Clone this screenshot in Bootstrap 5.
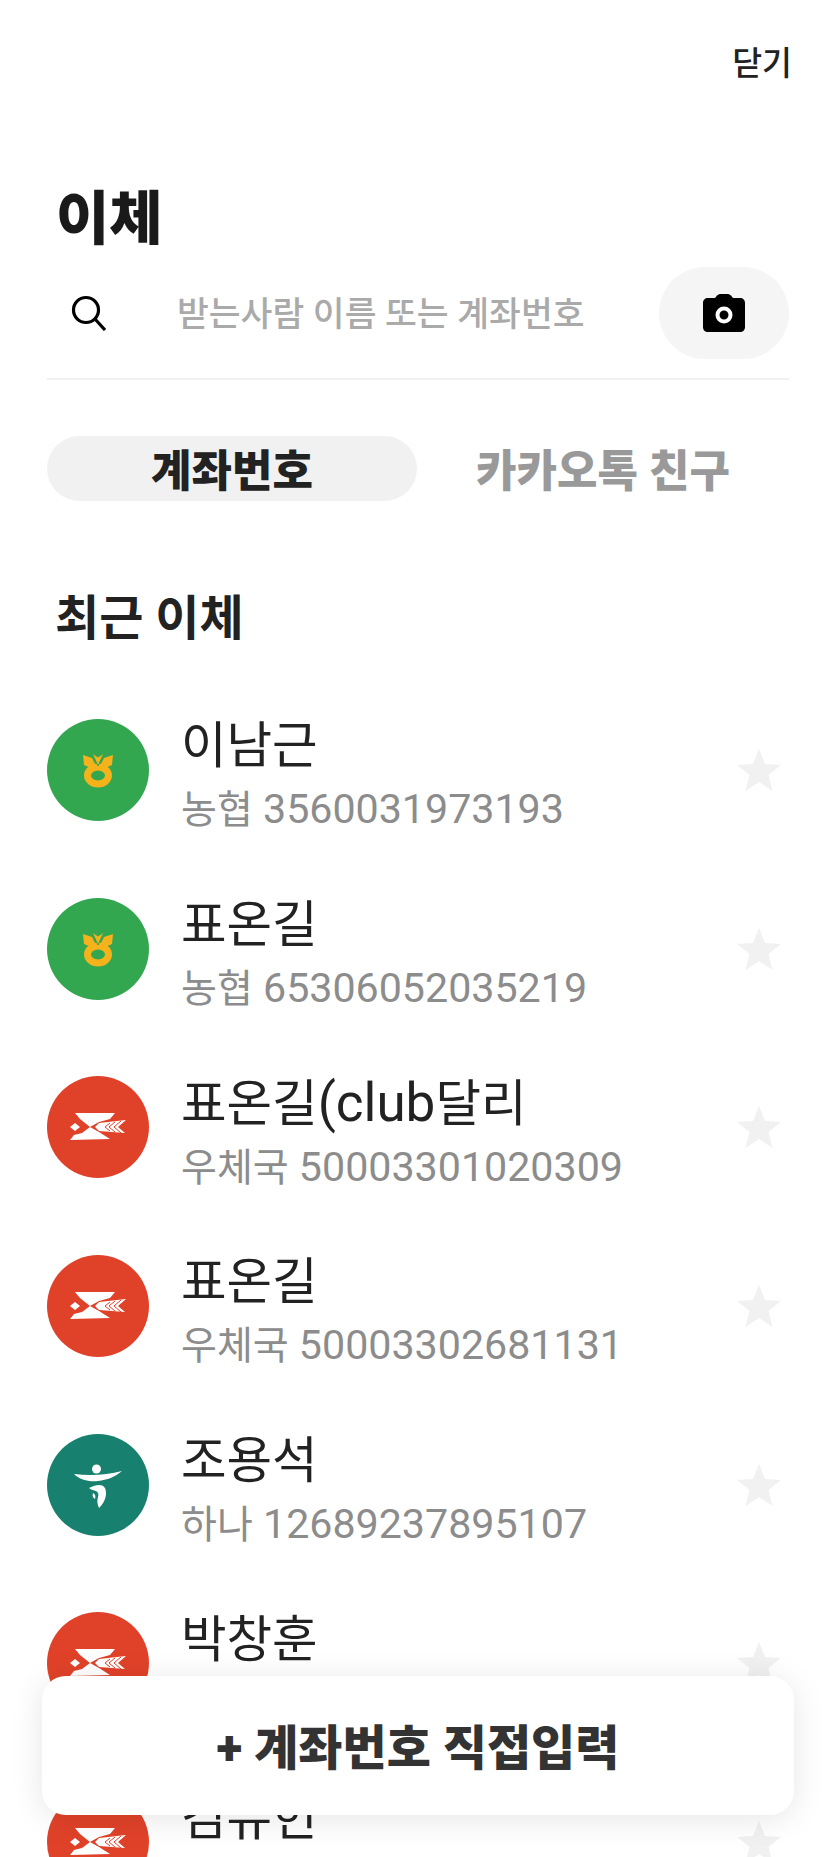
<!DOCTYPE html>
<html lang="ko">
<head>
  <meta charset="UTF-8" />
  <title>이체</title>
  <link href="https://cdn.jsdelivr.net/npm/bootstrap@5.3.0/dist/css/bootstrap.min.css" rel="stylesheet" />
  <style>
    html, body { height: 1857px; overflow: hidden; }
    body {
      position: relative;
      background: #fff;
      color: #222;
      font-family: Roboto, "Noto Sans CJK KR", sans-serif;
    }
    .top-close { padding: 39px 43px 0 0; height: 183px; font-size: 32.500px; line-height: 50px; font-weight: 500; }
    .page-title { font-size: 58px; font-weight: 900; line-height: 72px; margin: 0 0 0 56px; height: 84px; color: #1a1a1a; }
    .search-row { height: 92px; margin: 0 46px 0 47px; }
    .search-ico { width: 130px; padding-left: 24px; }
    .search-text { font-size: 34.600px; color: #aaa; font-weight: 500; padding-top: 4px; }
    .camera-pill { width: 130px; height: 92px; background: #f5f5f5; border-radius: 46px; }
    .search-line { height: 2px; background: #f1f1f1; margin: 19px 46px 0 47px; }
    .tab-row { margin: 56px 46px 0 47px; height: 65px; }
    .tab-on, .tab-off { width: 370px; border-radius: 33px; font-size: 44px; font-weight: 900; padding-top: 7px; }
    .tab-on { background: #f1f1f1; color: #222; }
    .tab-off { flex-grow: 1; color: #999; }
    .recent-title { font-size: 48px; font-weight: 700; margin: 86px 0 0 55px; line-height: 64px; height: 94px; }
    .acct-row { height: 178.600px; margin: 0 46px 0 47px; }
    .bank-logo { width: 102px; height: 102px; flex-shrink: 0; }
    .acct-name { font-size: 49.500px; line-height: 60px; }
    .acct-latin { font-size: 53px; }
    .acct-sub { font-size: 41.200px; line-height: 52px; color: #8c8c8c; margin-top: 7px; }
    .acct-bank { font-size: 39px; }
    .acct-text { margin: 12px 0 0 32px; }
    .star-ico { margin-right: 8px; }
    .add-btn {
      position: absolute; left: 42px; top: 1676px; width: 752px; height: 139px;
      background: #fff; border-radius: 24px; border: 0; padding-top: 13px;
      box-shadow: 0 4px 32px rgba(0,0,0,.1);
      font-size: 48px; font-weight: 900; color: #333;
    }
  </style>
</head>
<body>
  <svg width="0" height="0" class="position-absolute">
    <symbol id="logo-nh" viewBox="0 0 102 102">
      <circle cx="51" cy="51" r="51" fill="#33a650"/>
      <ellipse cx="51" cy="56.500" rx="10.500" ry="8.500" fill="none" stroke="#f6b21b" stroke-width="7"/>
      <path d="M36 36l9 3 4 8-5 2-7-3z" fill="#f6b21b"/>
      <path d="M66 36l-9 3-4 8 5 2 7-3z" fill="#f6b21b"/>
      <path d="M45 34l6 4 6-4-6 13z" fill="#f6b21b" stroke="#33a650" stroke-width="1"/>
    </symbol>
    <symbol id="logo-post" viewBox="0 0 102 102">
      <circle cx="51" cy="51" r="51" fill="#e04229"/>
      <path d="M28 37h40l-5 6-11 3-9 5-10-8z" fill="#fff"/>
      <path d="M43 51l9 5 11 7-40 1 4-5 8-2z" fill="#fff"/>
      <path d="M23 51l5-4 5 4-5 4z" fill="#fff"/>
      <path d="M48 51l4-4 27-3-8 7 7 6-26-2z" fill="#fff"/>
      <path d="M63 47l-5 4 5 4M68 46l-6 5 6 5M74 45l-7 6 7 6" stroke="#e04229" stroke-width="1" fill="none"/>
    </symbol>
    <symbol id="logo-hana" viewBox="0 0 102 102">
      <circle cx="51" cy="51" r="51" fill="#18806f"/>
      <circle cx="49.500" cy="35" r="4.500" fill="#fff"/>
      <path d="M27 40c16 2 33 1 48-3-7 6-15 9-24 10-9 1-18-1-24-7z" fill="#fff"/>
      <path d="M42 54c4-2 7-3 10-3 5 0 7 3 7 8 0 5-2 10-7 15-2-4-2-8-1-11 1-3 0-5-2-6-2-1-5-1-7-3z" fill="#fff"/>
      <path d="M46 59c2 1 3 3 2 6-2-1-3-3-2-6z" fill="#fff"/>
    </symbol>
    <symbol id="icon-star" viewBox="0 0 44 42">
      <path d="M22 0l6 15 16 1-12.500 10 4 16L22 33 8.500 42l4-16L0 16l16-1z" fill="#f1f1f1"/>
    </symbol>
  </svg>

  <div class="top-close d-flex justify-content-end">닫기</div>
  <h1 class="page-title">이체</h1>

  <div class="search-row d-flex align-items-center">
    <div class="search-ico">
      <svg width="36" height="36" viewBox="0 0 36 36" fill="none" stroke="#000" stroke-width="3.200" class="d-block">
        <circle cx="15" cy="15" r="12.500"/><path d="M24 24L34 35"/>
      </svg>
    </div>
    <div class="search-text flex-grow-1">받는사람 이름 또는 계좌번호</div>
    <div class="camera-pill d-flex align-items-center justify-content-center">
      <svg width="42" height="38" viewBox="0 0 42 38" class="d-block">
        <path d="M5 4h7l2-2.500C15 .5 16 0 17 0h8c1 0 2 .5 3 1.500L30 4h7c3 0 5 2 5 5v24c0 3-2 5-5 5H5c-3 0-5-2-5-5V9c0-3 2-5 5-5z" fill="#000"/>
        <circle cx="21" cy="21" r="6.500" fill="none" stroke="#fff" stroke-width="4"/>
      </svg>
    </div>
  </div>
  <div class="search-line"></div>

  <div class="tab-row d-flex">
    <div class="tab-on d-flex align-items-center justify-content-center">계좌번호</div>
    <div class="tab-off d-flex align-items-center justify-content-center">카카오톡 친구</div>
  </div>

  <div class="recent-title">최근 이체</div>

  <div class="acct-row d-flex align-items-center">
    <svg class="bank-logo"><use href="#logo-nh"/></svg>
    <div class="acct-text flex-grow-1"><div class="acct-name">이남근</div><div class="acct-sub"><span class="acct-bank">농협</span> 3560031973193</div></div>
    <svg class="star-ico" width="44" height="42"><use href="#icon-star"/></svg>
  </div>
  <div class="acct-row d-flex align-items-center">
    <svg class="bank-logo"><use href="#logo-nh"/></svg>
    <div class="acct-text flex-grow-1"><div class="acct-name">표온길</div><div class="acct-sub"><span class="acct-bank">농협</span> 65306052035219</div></div>
    <svg class="star-ico" width="44" height="42"><use href="#icon-star"/></svg>
  </div>
  <div class="acct-row d-flex align-items-center">
    <svg class="bank-logo"><use href="#logo-post"/></svg>
    <div class="acct-text flex-grow-1"><div class="acct-name">표온길<span class="acct-latin">(club</span>달리</div><div class="acct-sub"><span class="acct-bank">우체국</span> 50003301020309</div></div>
    <svg class="star-ico" width="44" height="42"><use href="#icon-star"/></svg>
  </div>
  <div class="acct-row d-flex align-items-center">
    <svg class="bank-logo"><use href="#logo-post"/></svg>
    <div class="acct-text flex-grow-1"><div class="acct-name">표온길</div><div class="acct-sub"><span class="acct-bank">우체국</span> 50003302681131</div></div>
    <svg class="star-ico" width="44" height="42"><use href="#icon-star"/></svg>
  </div>
  <div class="acct-row d-flex align-items-center">
    <svg class="bank-logo"><use href="#logo-hana"/></svg>
    <div class="acct-text flex-grow-1"><div class="acct-name">조용석</div><div class="acct-sub"><span class="acct-bank">하나</span> 12689237895107</div></div>
    <svg class="star-ico" width="44" height="42"><use href="#icon-star"/></svg>
  </div>
  <div class="acct-row d-flex align-items-center">
    <svg class="bank-logo"><use href="#logo-post"/></svg>
    <div class="acct-text flex-grow-1"><div class="acct-name">박창훈</div><div class="acct-sub">&nbsp;</div></div>
    <svg class="star-ico" width="44" height="42"><use href="#icon-star"/></svg>
  </div>
  <div class="acct-row d-flex align-items-center">
    <svg class="bank-logo"><use href="#logo-post"/></svg>
    <div class="acct-text flex-grow-1"><div class="acct-name">김유헌</div><div class="acct-sub">&nbsp;</div></div>
    <svg class="star-ico" width="44" height="42"><use href="#icon-star"/></svg>
  </div>

  <button type="button" class="add-btn btn">+ 계좌번호 직접입력</button>

  <script src="https://cdn.jsdelivr.net/npm/bootstrap@5.3.0/dist/js/bootstrap.bundle.min.js"></script>
</body>
</html>
